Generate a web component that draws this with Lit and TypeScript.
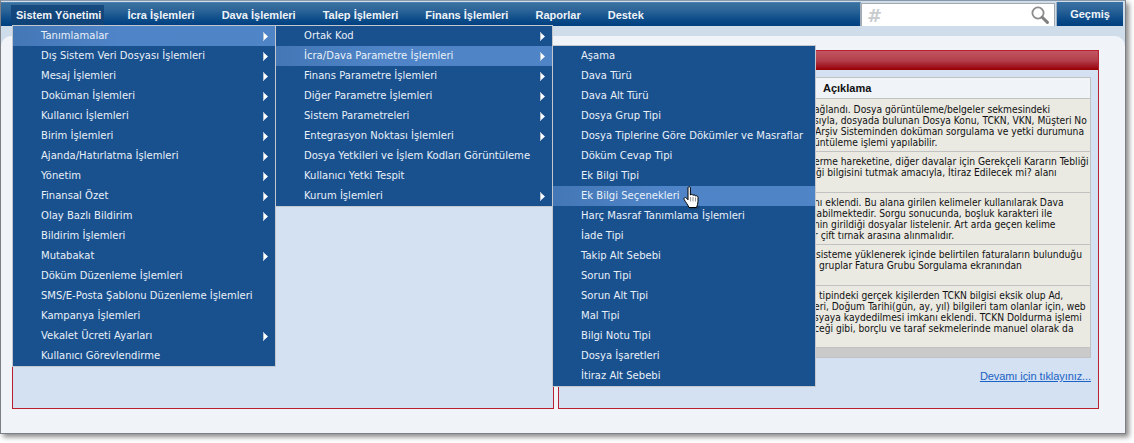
import { LitElement, html, css } from "lit";
import { customElement } from "lit/decorators.js";
import { classMap } from "lit/directives/class-map.js";

type Item = [string, boolean?, boolean?];

const MENU1: Item[] = [
  ["Tanımlamalar", true, true],
  ["Dış Sistem Veri Dosyası İşlemleri", true],
  ["Mesaj İşlemleri", true],
  ["Doküman İşlemleri", true],
  ["Kullanıcı İşlemleri", true],
  ["Birim İşlemleri", true],
  ["Ajanda/Hatırlatma İşlemleri", true],
  ["Yönetim", true],
  ["Finansal Özet", true],
  ["Olay Bazlı Bildirim", true],
  ["Bildirim İşlemleri"],
  ["Mutabakat", true],
  ["Döküm Düzenleme İşlemleri"],
  ["SMS/E-Posta Şablonu Düzenleme İşlemleri"],
  ["Kampanya İşlemleri"],
  ["Vekalet Ücreti Ayarları", true],
  ["Kullanıcı Görevlendirme"],
];
const MENU2: Item[] = [
  ["Ortak Kod", true],
  ["İcra/Dava Parametre İşlemleri", true, true],
  ["Finans Parametre İşlemleri", true],
  ["Diğer Parametre İşlemleri", true],
  ["Sistem Parametreleri", true],
  ["Entegrasyon Noktası İşlemleri", true],
  ["Dosya Yetkileri ve İşlem Kodları Görüntüleme"],
  ["Kullanıcı Yetki Tespit"],
  ["Kurum İşlemleri", true],
];
const MENU3: Item[] = [
  ["Aşama"],
  ["Dava Türü"],
  ["Dava Alt Türü"],
  ["Dosya Grup Tipi"],
  ["Dosya Tiplerine Göre Dökümler ve Masraflar"],
  ["Döküm Cevap Tipi"],
  ["Ek Bilgi Tipi"],
  ["Ek Bilgi Seçenekleri", false, true],
  ["Harç Masraf Tanımlama İşlemleri"],
  ["İade Tipi"],
  ["Takip Alt Sebebi"],
  ["Sorun Tipi"],
  ["Sorun Alt Tipi"],
  ["Mal Tipi"],
  ["Bilgi Notu Tipi"],
  ["Dosya İşaretleri"],
  ["İtiraz Alt Sebebi"],
];

const NAV = ["İcra İşlemleri", "Dava İşlemleri", "Talep İşlemleri", "Finans İşlemleri", "Raporlar", "Destek"];

const ROWS: [string, number][][] = [
  [
    ["ağlandı. Dosya görüntüleme/belgeler sekmesindeki", 0],
    ["sıyla, dosyada bulunan Dosya Konu, TCKN, VKN, Müşteri No", 0],
    ["Arşiv Sisteminden doküman sorgulama ve yetki durumuna", 1],
    ["üntüleme işlemi yapılabilir.", 0],
  ],
  [
    ["erme hareketine, diğer davalar için Gerekçeli Kararın Tebliği", 0],
    ["ği bilgisini tutmak amacıyla, İtiraz Edilecek mi? alanı", 2],
    ["", 0],
  ],
  [
    ["nı eklendi. Bu alana girilen kelimeler kullanılarak Dava", 0],
    ["labilmektedir. Sorgu sonucunda, boşluk karakteri ile", 0],
    ["nin girildiği dosyalar listelenir. Art arda geçen kelime", 0],
    ["r çift tırnak arasına alınmalıdır.", 0],
  ],
  [
    ["sisteme yüklenerek içinde belirtilen faturaların bulunduğu", 2],
    ["gruplar Fatura Grubu Sorgulama ekranından", 5],
    ["", 0],
  ],
  [
    ["tipindeki gerçek kişilerden TCKN bilgisi eksik olup Ad,", 5],
    ["eri, Doğum Tarihi(gün, ay, yıl) bilgileri tam olanlar için, web", 0],
    ["syaya kaydedilmesi imkanı eklendi. TCKN Doldurma işlemi", 0],
    ["ceği gibi, borçlu ve taraf sekmelerinde manuel olarak da", 0],
    ["", 0],
  ],
];

@customElement("app-root")
export class AppRoot extends LitElement {
  static styles = css`
    :host {
      display: block;
      width: 1134px;
      height: 443px;
      background: #fff;
      overflow: hidden;
      position: relative;
      font-family: "DejaVu Sans", Verdana, sans-serif;
    }
    .window {
      width: 1124px;
      height: 432px;
      border: 1px solid #7c7f84;
      border-top: 1px solid #8a99aa;
      box-shadow: 3px 3px 5px rgba(60, 60, 60, 0.6);
      background: #cfdcea;
      display: flex;
      flex-direction: column;
      overflow: hidden;
    }
    .top {
      height: 24px;
      margin-top: 1px;
      display: flex;
      align-items: stretch;
      flex: none;
    }
    .nav {
      flex: 1;
      display: flex;
      padding: 0 0 0 10px;
      align-items: center;
      background: linear-gradient(#39719f, #2d6599 30%, #0a4a88 75%, #003f80);
      font: bold 11px "Liberation Sans", Arial, sans-serif;
      color: #eef3f8;
      border-top: 1px solid #4a7fb0;
      border-right: 1px solid #9fb0c0;
      min-width: 0;
    }
    .nav-item {
      margin-right: 27px;
      white-space: nowrap;
    }
    .nav-item.on {
      margin-right: 23px;
      padding: 4px 3px 4px 5px;
      background: linear-gradient(#174b7f, #0f4278);
    }
    .search {
      width: 194px;
      flex: none;
      background: #fff;
      border: 1px solid #a2a8ad;
      border-bottom: none;
      box-sizing: border-box;
      display: flex;
      align-items: center;
      justify-content: space-between;
      padding: 0 5px 0 5px;
      height: 23px;
      margin-top: 1px;
    }
    .hash {
      font: italic bold 18px "DejaVu Sans", sans-serif;
      color: #c9cccf;
    }
    .hist {
      width: 67px;
      margin-left: 1px;
      flex: none;
      box-sizing: border-box;
      display: flex;
      align-items: center;
      justify-content: center;
      background: linear-gradient(#3a72a4, #2d6599 30%, #0a4a88 75%, #003f80);
      color: #eef3f8;
      font: bold 11px "Liberation Sans", Arial, sans-serif;
      border-left: 1px solid #9fb0c0;
      margin-right: 2px;
    }
    .band {
      height: 10px;
      flex: none;
    }
    .body {
      flex: 1;
      background: #f0f4f9;
      border-radius: 10px 10px 0 0;
      padding: 14px 25px 25px 11px;
      display: flex;
      gap: 4px;
      min-height: 0;
    }
    .panel {
      box-sizing: border-box;
      background: #d4e1f2;
      border: 1px solid #b8202f;
      height: 359px;
    }
    .left {
      width: 542px;
      flex: none;
    }
    .right {
      width: 541px;
      flex: none;
      display: flex;
      flex-direction: column;
    }
    .red {
      height: 19px;
      flex: none;
      background: linear-gradient(#c25560, #b23f4b 50%, #9c0a14 90%, #970000);
    }
    .table {
      margin: 7px 7px 0 auto;
      width: 400px;
      box-sizing: border-box;
      border: 1px solid #c2c2c2;
      background: #eae9e2;
      color: #111;
      font-family: "DejaVu Sans Condensed", "DejaVu Sans", sans-serif;
      font-stretch: condensed;
      font-size: 10.2px;
      flex: none;
    }
    .thead {
      height: 21px;
      box-sizing: border-box;
      background: #f0f3f8;
      border-bottom: 1px solid #c2c2c2;
      padding: 0 0 0 131px;
      display: flex;
      align-items: center;
      font: bold 11px "Liberation Sans", Arial, sans-serif;
      color: #111;
    }
    .row {
      border-bottom: 1px solid #c2c2c2;
      padding: 4px 0 3px 0;
    }
    .thead + .row {
      padding-top: 5px;
    }
    .row:nth-last-child(2) {
      padding-bottom: 2px;
    }
    .line {
      height: 11px;
      line-height: 11px;
      white-space: nowrap;
    }
    .tfoot {
      height: 9px;
      background: #cacaca;
    }
    .more {
      margin: 12px 7px 0 auto;
      color: #1a62c4;
      font: 11px "Liberation Sans", Arial, sans-serif;
      letter-spacing: -0.08px;
      text-decoration: underline;
    }
    .menu {
      position: absolute;
      box-sizing: border-box;
      background: #19508e;
      border: 1px solid #c4c8cc;
      font-size: 10px;
      letter-spacing: 0.02px;
      color: #e9f1f9;
      z-index: 2;
    }
    .m1 { left: 12px; top: 25px; width: 264px; }
    .m2 { left: 275px; top: 25px; width: 278px; }
    .m3 { left: 552px; top: 45px; width: 264px; }
    .mi {
      height: 20px;
      line-height: 19px;
      white-space: nowrap;
      position: relative;
      padding-left: 28px;
    }
    .mi.on {
      background: linear-gradient(90deg, #4377b5, #4f84c8 40%, #4f85c6);
    }
    .arr {
      position: absolute;
      right: 7px;
      top: 6px;
      width: 5px;
      height: 9px;
      display: block;
    }
    .hand {
      position: absolute;
      left: 683px;
      top: 186px;
      z-index: 3;
      display: block;
    }
  `;

  private arrow() {
    return html`<svg class="arr" viewBox="0 0 5 9"><path d="M0 0L5 4.5L0 9Z" fill="#fff"/><path d="M0 0L1 1V8L0 9Z" fill="#b9c4d2"/></svg>`;
  }

  private menu(cls: string, items: Item[]) {
    return html`<div class="menu ${cls}">
      ${items.map(
        ([t, sub, on]) => html`<div class=${classMap({ mi: true, on: !!on })}>${t}${sub ? this.arrow() : ""}</div>`
      )}
    </div>`;
  }

  render() {
    return html`
      <div class="window">
        <div class="top">
          <div class="nav">
            <div class="nav-item on">Sistem Yönetimi</div>
            ${NAV.map((n) => html`<div class="nav-item">${n}</div>`)}
          </div>
          <div class="search">
            <span class="hash">#</span>
            <svg width="18" height="18" viewBox="0 0 18 18">
              <circle cx="7" cy="7" r="5.6" fill="none" stroke="#8c8c8c" stroke-width="1.8"/>
              <path d="M11.2 11.2L16.4 16.4" stroke="#808080" stroke-width="3" stroke-linecap="round"/>
            </svg>
          </div>
          <div class="hist">Geçmiş</div>
        </div>
        <div class="band"></div>
        <div class="body">
          <div class="panel left"></div>
          <div class="panel right">
            <div class="red"></div>
            <div class="table">
              <div class="thead">Açıklama</div>
              ${ROWS.map(
                (r) => html`<div class="row">
                  ${r.map(([t, o]) => html`<div class="line" style="padding-left:${122 + o}px">${t}</div>`)}
                </div>`
              )}
              <div class="tfoot"></div>
            </div>
            <div class="more">Devamı için tıklayınız...</div>
          </div>
        </div>
      </div>
      ${this.menu("m1", MENU1)} ${this.menu("m2", MENU2)} ${this.menu("m3", MENU3)}
      <svg class="hand" width="18" height="24" viewBox="0 0 18 24">
        <path
          d="M5 1.6C5 .5 7.4 .5 7.4 1.6V9C8 8 9.8 8.2 10 9.4C10.6 8.5 12.2 8.8 12.4 10C13.2 9.4 15 9.8 15 11.4V15.5C15 18 14 19.5 13.6 21.5H6C5.4 19.5 2.2 15.6 1.2 13.6C.4 12 2.2 10.9 3.4 12L5 13.8Z"
          fill="#fff"
          stroke="#000"
          stroke-width="1"
          stroke-linejoin="round"
        />
        <path d="M7.6 11V15.5M10 11V15.5M12.5 11.5V15.5" stroke="#777" stroke-width=".8"/>
        <path d="M6 21.8H13.8L16.5 18.5V22L14 23.6H7Z" fill="#1a2a3a" opacity=".35"/>
      </svg>
    `;
  }
}
